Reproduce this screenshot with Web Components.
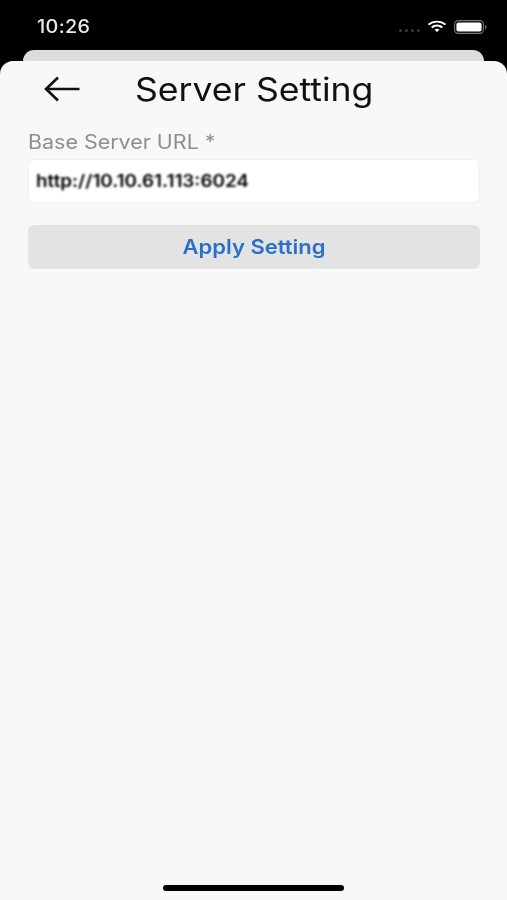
<!DOCTYPE html>
<html lang="en">
<head>
<meta charset="utf-8">
<title>Server Setting</title>
<style>
html, body { margin: 0; padding: 0; background: #000; }
</style>
</head>
<body>
<app-screen>
  <status-bar slot="status" time="10:26"></status-bar>
  <nav-header slot="sheet" title="Server Setting"></nav-header>
  <form-field slot="sheet" label="Base Server URL *" value="http://10.10.61.113:6024"></form-field>
  <action-button slot="sheet">Apply Setting</action-button>
</app-screen>
<script>
class AppScreen extends HTMLElement {
  constructor() {
    super();
    this.attachShadow({ mode: 'open' }).innerHTML = `
<style>
:host { display: flex; flex-direction: column; width: 507px; height: 900px; background: #000; overflow: hidden; font-family: Inter, "Liberation Sans", sans-serif; }
.behind { flex: none; height: 11px; margin: 0 23px; background: #dcdcdc; border-radius: 11px 11px 0 0; }
.sheet { flex: 1; display: flex; flex-direction: column; background: #f8f8f8; border-radius: 13px 13px 0 0; }
.content { flex: 1; display: flex; flex-direction: column; }
.home { flex: none; align-self: center; width: 181px; height: 6px; margin-bottom: 9px; background: #000; border-radius: 3px; filter: blur(.4px); }
</style>
<slot name="status"></slot>
<div class="behind"></div>
<div class="sheet">
  <div class="content"><slot name="sheet"></slot></div>
  <div class="home"></div>
</div>`;
  }
}

class StatusBar extends HTMLElement {
  constructor() {
    super();
    this.attachShadow({ mode: 'open' }).innerHTML = `
<style>
:host { display: flex; flex: none; height: 50px; box-sizing: border-box; padding: 16px 20px 0 37px; align-items: flex-start; justify-content: space-between; color: #e8e8e8; }
.time { font-size: 18px; line-height: 21px; font-weight: 500; letter-spacing: .3px; transform: scaleX(1.1); transform-origin: left; filter: blur(.4px); }
.icons { display: flex; align-items: flex-start; gap: 7px; margin-top: 4px; filter: blur(.4px); }
.dots { display: flex; gap: 3px; margin-top: 9px; }
.dots i { width: 3px; height: 3px; border-radius: 50%; background: #3c3c3c; }
svg { display: block; }
</style>
<div class="time" id="time"></div>
<div class="icons">
  <div class="dots"><i></i><i></i><i></i><i></i></div>
  <svg width="20" height="13" viewBox="0 0 20 15" preserveAspectRatio="none">
    <path d="M1.5 5.4a12 12 0 0 1 17 0" fill="none" stroke="#fff" stroke-width="2.2"/>
    <path d="M4.7 8.6a7.5 7.5 0 0 1 10.6 0" fill="none" stroke="#fff" stroke-width="2.2"/>
    <path d="M7.6 11.2l2.4 2.6 2.4-2.6a3.4 3.4 0 0 0-4.8 0z" fill="#fff"/>
  </svg>
  <svg width="33" height="14" viewBox="0 0 33 14">
    <rect x=".6" y=".6" width="28.8" height="12.8" rx="3.6" fill="none" stroke="#777" stroke-width="1.1"/>
    <rect x="2.4" y="2.4" width="25.2" height="9.2" rx="2" fill="#fff"/>
    <path d="M31 4.8c1 .3 1.6 1.1 1.6 2.2s-.6 1.9-1.6 2.2z" fill="#666"/>
  </svg>
</div>`;
  }
  connectedCallback() {
    this.shadowRoot.querySelector('#time').textContent = this.getAttribute('time');
  }
}

class NavHeader extends HTMLElement {
  constructor() {
    super();
    this.attachShadow({ mode: 'open' }).innerHTML = `
<style>
:host { display: flex; flex: none; align-items: center; height: 56px; padding-left: 44px; color: #111; }
svg { display: block; flex: none; filter: blur(.3px); }
h1 { margin: 2px 0 0 55px; font-size: 32px; line-height: 56px; font-weight: 400; white-space: nowrap; transform: scaleX(1.112); transform-origin: left; filter: blur(.4px); }
</style>
<svg width="36" height="28" viewBox="0 0 36 28">
  <path d="M35.5 14H2M14 2.5L2 14l12 11.5" fill="none" stroke="#111" stroke-width="2.6"/>
</svg>
<h1 id="title"></h1>`;
  }
  connectedCallback() {
    this.shadowRoot.querySelector('#title').textContent = this.getAttribute('title');
  }
}

class FormField extends HTMLElement {
  constructor() {
    super();
    this.attachShadow({ mode: 'open' }).innerHTML = `
<style>
:host { display: block; flex: none; margin: 13px 27px 0 28px; }
label { display: block; font-size: 19.5px; line-height: 24px; color: #8e8e8e; transform: scaleX(1.1); transform-origin: left; filter: blur(.4px); }
.box { display: flex; align-items: center; height: 44px; margin-top: 5px; box-sizing: border-box; padding: 0 8px; background: #fff; border-radius: 6px; box-shadow: 0 0 0 1px #f0f0f0 inset; }
.val { font-size: 17px; font-weight: 600; color: #111; white-space: nowrap; transform: scaleX(1.11); transform-origin: left; filter: blur(1.1px) contrast(1.6); }
</style>
<label id="label"></label>
<div class="box"><span class="val" id="val"></span></div>`;
  }
  connectedCallback() {
    this.shadowRoot.querySelector('#label').textContent = this.getAttribute('label');
    this.shadowRoot.querySelector('#val').textContent = this.getAttribute('value');
  }
}

class ActionButton extends HTMLElement {
  constructor() {
    super();
    this.attachShadow({ mode: 'open' }).innerHTML = `
<style>
:host { display: flex; flex: none; align-items: center; justify-content: center; height: 44px; margin: 22px 27px 0 28px; background: #e3e3e3; border-radius: 6px; color: #2a6fc9; font-size: 20px; font-weight: 600; }
span { transform: scaleX(1.1); filter: blur(.4px); }
</style>
<span><slot></slot></span>`;
  }
}

customElements.define('app-screen', AppScreen);
customElements.define('status-bar', StatusBar);
customElements.define('nav-header', NavHeader);
customElements.define('form-field', FormField);
customElements.define('action-button', ActionButton);
</script>
</body>
</html>
